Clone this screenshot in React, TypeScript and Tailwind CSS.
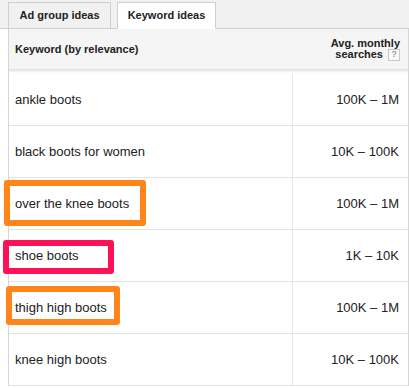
import React from 'react';

type Row = { keyword: string; searches: string };

const rows: Row[] = [
  { keyword: 'ankle boots', searches: '100K – 1M' },
  { keyword: 'black boots for women', searches: '10K – 100K' },
  { keyword: 'over the knee boots', searches: '100K – 1M' },
  { keyword: 'shoe boots', searches: '1K – 10K' },
  { keyword: 'thigh high boots', searches: '100K – 1M' },
  { keyword: 'knee high boots', searches: '10K – 100K' },
];

const App: React.FC = () => {
  return (
    <div className="relative w-[409px] h-[388px] overflow-hidden bg-white font-['Liberation_Sans',Arial,sans-serif] text-[#222]">
      {/* tab strip */}
      <div className="flex items-end gap-[6px] h-[29px] pl-[8px] bg-[#f1f1f1] border-b border-[#cfcfcf]">
        <div className="-mb-px flex items-center justify-center w-[103px] h-[27px] bg-[#f1f1f1] border border-[#cfcfcf] text-[11px] font-bold">
          Ad group ideas
        </div>
        <div className="-mb-px flex items-center justify-center w-[99px] h-[27px] bg-white border border-[#cfcfcf] border-b-white text-[11px] font-bold">
          Keyword ideas
        </div>
      </div>

      {/* table */}
      <div className="ml-[8px] border-l border-r border-[#d6d6d6]">
        <div className="flex h-[40px] bg-[#f5f5f5]">
          <div className="flex-1 flex items-center pl-[6px] text-[11px] font-bold">
            Keyword (by relevance)
          </div>
          <div className="w-[116px] flex flex-col justify-center items-end pr-[8px] text-[11px] leading-[11px] font-bold text-right">
            <span>Avg. monthly</span>
            <span className="flex items-center">
              searches
              <span className="ml-[5px] flex items-center justify-center w-[12px] h-[12px] border border-[#c8c8c8] bg-[#f9f9f9] text-[9px] font-normal text-[#777]">
                ?
              </span>
            </span>
          </div>
        </div>
        <div className="h-[5px] bg-[linear-gradient(to_bottom,#dcdcdc,#efefef_40%,#ffffff_80%)]" />

        {rows.map((r) => (
          <div key={r.keyword} className="flex h-[52px] border-b border-[#e3e3e3] text-[13px]">
            <div className="flex-1 flex items-center pl-[6px]">{r.keyword}</div>
            <div className="w-[116px] flex items-center justify-end pr-[9px] border-l border-[#e8e8e8]">
              {r.searches}
            </div>
          </div>
        ))}
      </div>

      {/* annotation boxes */}
      <div className="absolute left-[4px] top-[180px] w-[142px] h-[46px] border-[6px] border-[#ff851b] rounded-[3px]" />
      <div className="absolute left-[3px] top-[240px] w-[111px] h-[34px] border-[6px] border-[#ff1158] rounded-[3px]" />
      <div className="absolute left-[6px] top-[286px] w-[114px] h-[39px] border-[6px] border-[#ff851b] rounded-[3px]" />
    </div>
  );
};

export default App;
